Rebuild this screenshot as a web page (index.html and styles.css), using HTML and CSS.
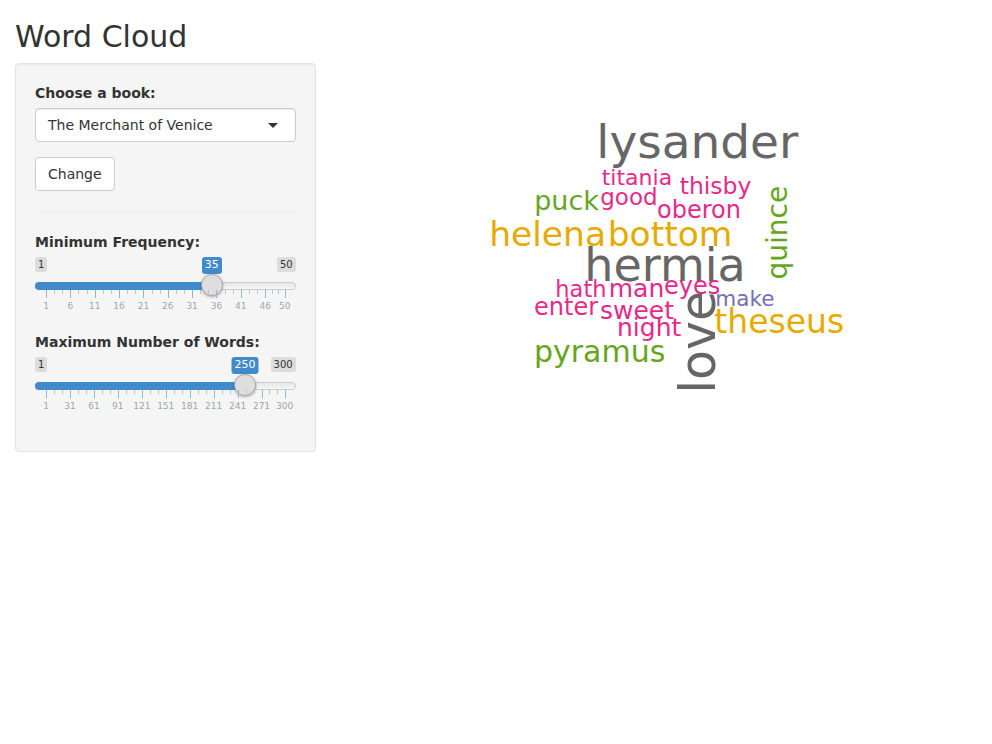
FILE: index.html
```html
<!DOCTYPE html>
<html lang="en">
<head>
<meta charset="utf-8">
<title>Word Cloud</title>
<link rel="stylesheet" href="styles.css">
</head>
<body>
<div class="container">
  <h2 class="title">Word Cloud</h2>
  <div class="row">
    <div class="sidebar">
      <form class="well">
        <div class="form-group">
          <label class="control-label">Choose a book:</label>
          <div class="select-input">
            <span class="select-value">The Merchant of Venice</span>
            <span class="caret"></span>
          </div>
        </div>
        <button type="button" class="btn">Change</button>
        <hr class="divider">
        <div class="form-group">
          <label class="control-label">Minimum Frequency:</label>
          <div class="irs">
            <span class="irs-min">1</span>
            <span class="irs-max">50</span>
            <span class="irs-line"></span>
            <span class="irs-bar" style="width:176.8px"></span>
            <span class="irs-single" style="left:176.8px">35</span>
            <span class="irs-handle" style="left:165.8px"></span>
            <div class="irs-grid">
              <span class="pol big" style="left:0%"></span>
              <span class="pol" style="left:3.401%"></span>
              <span class="pol" style="left:6.803%"></span>
              <span class="pol big" style="left:10.204%"></span>
              <span class="pol" style="left:13.605%"></span>
              <span class="pol" style="left:17.007%"></span>
              <span class="pol big" style="left:20.408%"></span>
              <span class="pol" style="left:23.810%"></span>
              <span class="pol" style="left:27.211%"></span>
              <span class="pol big" style="left:30.612%"></span>
              <span class="pol" style="left:34.014%"></span>
              <span class="pol" style="left:37.415%"></span>
              <span class="pol big" style="left:40.816%"></span>
              <span class="pol" style="left:44.218%"></span>
              <span class="pol" style="left:47.619%"></span>
              <span class="pol big" style="left:51.020%"></span>
              <span class="pol" style="left:54.422%"></span>
              <span class="pol" style="left:57.823%"></span>
              <span class="pol big" style="left:61.224%"></span>
              <span class="pol" style="left:64.626%"></span>
              <span class="pol" style="left:68.027%"></span>
              <span class="pol big" style="left:71.429%"></span>
              <span class="pol" style="left:74.830%"></span>
              <span class="pol" style="left:78.231%"></span>
              <span class="pol big" style="left:81.633%"></span>
              <span class="pol" style="left:85.034%"></span>
              <span class="pol" style="left:88.435%"></span>
              <span class="pol big" style="left:91.837%"></span>
              <span class="pol" style="left:94.558%"></span>
              <span class="pol" style="left:97.279%"></span>
              <span class="pol big" style="left:100%"></span>
              <span class="grid-text" style="left:0%">1</span>
              <span class="grid-text" style="left:10.204%">6</span>
              <span class="grid-text" style="left:20.408%">11</span>
              <span class="grid-text" style="left:30.612%">16</span>
              <span class="grid-text" style="left:40.816%">21</span>
              <span class="grid-text" style="left:51.020%">26</span>
              <span class="grid-text" style="left:61.224%">31</span>
              <span class="grid-text" style="left:71.429%">36</span>
              <span class="grid-text" style="left:81.633%">41</span>
              <span class="grid-text" style="left:91.837%">46</span>
              <span class="grid-text" style="left:100%">50</span>
            </div>
          </div>
        </div>
        <div class="form-group">
          <label class="control-label">Maximum Number of Words:</label>
          <div class="irs">
            <span class="irs-min">1</span>
            <span class="irs-max">300</span>
            <span class="irs-line"></span>
            <span class="irs-bar" style="width:210px"></span>
            <span class="irs-single" style="left:210px">250</span>
            <span class="irs-handle" style="left:199px"></span>
            <div class="irs-grid">
              <span class="pol big" style="left:0%"></span>
              <span class="pol" style="left:3.344%"></span>
              <span class="pol" style="left:6.689%"></span>
              <span class="pol big" style="left:10.033%"></span>
              <span class="pol" style="left:13.378%"></span>
              <span class="pol" style="left:16.722%"></span>
              <span class="pol big" style="left:20.067%"></span>
              <span class="pol" style="left:23.411%"></span>
              <span class="pol" style="left:26.756%"></span>
              <span class="pol big" style="left:30.100%"></span>
              <span class="pol" style="left:33.445%"></span>
              <span class="pol" style="left:36.789%"></span>
              <span class="pol big" style="left:40.134%"></span>
              <span class="pol" style="left:43.478%"></span>
              <span class="pol" style="left:46.823%"></span>
              <span class="pol big" style="left:50.167%"></span>
              <span class="pol" style="left:53.512%"></span>
              <span class="pol" style="left:56.856%"></span>
              <span class="pol big" style="left:60.201%"></span>
              <span class="pol" style="left:63.545%"></span>
              <span class="pol" style="left:66.890%"></span>
              <span class="pol big" style="left:70.234%"></span>
              <span class="pol" style="left:73.579%"></span>
              <span class="pol" style="left:76.923%"></span>
              <span class="pol big" style="left:80.268%"></span>
              <span class="pol" style="left:83.612%"></span>
              <span class="pol" style="left:86.957%"></span>
              <span class="pol big" style="left:90.301%"></span>
              <span class="pol" style="left:93.534%"></span>
              <span class="pol" style="left:96.767%"></span>
              <span class="pol big" style="left:100%"></span>
              <span class="grid-text" style="left:0%">1</span>
              <span class="grid-text" style="left:10.033%">31</span>
              <span class="grid-text" style="left:20.067%">61</span>
              <span class="grid-text" style="left:30.100%">91</span>
              <span class="grid-text" style="left:40.134%">121</span>
              <span class="grid-text" style="left:50.167%">151</span>
              <span class="grid-text" style="left:60.201%">181</span>
              <span class="grid-text" style="left:70.234%">211</span>
              <span class="grid-text" style="left:80.268%">241</span>
              <span class="grid-text" style="left:90.301%">271</span>
              <span class="grid-text" style="left:100%">300</span>
            </div>
          </div>
        </div>
      </form>
    </div>
    <div class="main">
      <svg class="cloud" width="631" height="400" viewBox="0 0 631 400">
        <g transform="translate(-345.667 -63)">
          <text class="w gray" x="596" y="157.5" font-size="47">lysander</text>
          <text class="w pink" x="601.4" y="185" font-size="22">titania</text>
          <text class="w pink" x="679.4" y="194" font-size="23.5">thisby</text>
          <text class="w green" x="533.8" y="209.5" font-size="27">puck</text>
          <text class="w pink" x="599.9" y="205" font-size="23">good</text>
          <text class="w pink" x="656.7" y="218" font-size="24">oberon</text>
          <text class="w gold" x="488.8" y="245.5" font-size="34.5">helena</text>
          <text class="w gold" x="607.3" y="245.5" font-size="34.5">bottom</text>
          <text class="w gray" x="584" y="281" font-size="46">hermia</text>
          <text class="w pink" x="555" y="297" font-size="22.5">hath</text>
          <text class="w pink" x="608.4" y="297" font-size="25">man</text>
          <text class="w pink" x="663.7" y="294" font-size="24">eyes</text>
          <text class="w pink" x="533.7" y="315" font-size="24">enter</text>
          <text class="w pink" x="599.6" y="319" font-size="25">sweet</text>
          <text class="w pink" x="616.7" y="336" font-size="25">night</text>
          <text class="w purple" x="715" y="306" font-size="21.5">make</text>
          <text class="w gold" x="714" y="333" font-size="33">theseus</text>
          <text class="w green" x="533.6" y="362" font-size="30">pyramus</text>
          <text class="w green" transform="translate(787 279.5) rotate(-90)" font-size="28">quince</text>
          <text class="w gray" transform="translate(715 393.6) rotate(-90)" font-size="49">love</text>
        </g>
      </svg>
    </div>
  </div>
</div>
</body>
</html>
```

FILE: styles.css
```css
* {
  box-sizing: border-box;
}

html, body {
  margin: 0;
  padding: 0;
  background: #ffffff;
}

body {
  font-family: "DejaVu Sans", "Liberation Sans", sans-serif;
  font-size: 14px;
  line-height: 1.42857143;
  color: #333333;
}

.container {
  padding: 0 15px;
}

.title {
  font-size: 30px;
  font-weight: 500;
  line-height: 1.1;
  margin: 20px 0 10px;
  color: #333333;
}

.row {
  display: flex;
  margin: 0 -15px;
}

.sidebar {
  flex: 0 0 33.33333%;
  padding: 0 15px;
}

.main {
  flex: 0 0 66.66667%;
  padding: 0 15px;
}

.well {
  display: block;
  margin: 0 0 20px;
  padding: 19px;
  background-color: #f5f5f5;
  border: 1px solid #e3e3e3;
  border-radius: 4px;
  box-shadow: inset 0 1px 1px rgba(0, 0, 0, 0.05);
}

.form-group {
  margin-bottom: 15px;
}

.control-label {
  display: block;
  font-weight: 700;
  line-height: 20px;
  margin-bottom: 5px;
}

.select-input {
  display: flex;
  align-items: center;
  height: 34px;
  padding: 6px 12px;
  background: #ffffff;
  border: 1px solid #cccccc;
  border-radius: 4px;
  box-shadow: inset 0 1px 1px rgba(0, 0, 0, 0.075);
  line-height: 20px;
  color: #333333;
}

.select-value {
  flex: 1 1 auto;
}

.caret {
  flex: 0 0 auto;
  width: 0;
  height: 0;
  margin-right: 5px;
  margin-top: 1px;
  border-style: solid;
  border-width: 5px 5px 0 5px;
  border-color: #333333 transparent transparent transparent;
}

.btn {
  display: inline-block;
  height: 34px;
  padding: 6px 12px;
  font-family: inherit;
  font-size: 14px;
  line-height: 20px;
  color: #333333;
  background-color: #ffffff;
  border: 1px solid #cccccc;
  border-radius: 4px;
  margin: 0;
  vertical-align: top;
}

.divider {
  margin: 20px 0;
  border: 0;
  border-top: 1px solid #eeeeee;
  height: 0;
}

/* range slider */
.irs {
  position: relative;
  height: 60px;
}

.irs-min,
.irs-max {
  position: absolute;
  top: 0;
  padding: 1px 3px;
  font-size: 10px;
  line-height: 1.333;
  color: #333333;
  background-color: rgba(0, 0, 0, 0.1);
  border-radius: 3px;
}

.irs-min {
  left: 0;
}

.irs-max {
  right: 0;
}

.irs-single {
  position: absolute;
  top: 0;
  transform: translateX(-50%);
  padding: 1px 3px;
  font-size: 11px;
  line-height: 1.333;
  color: #ffffff;
  background-color: #428bca;
  border-radius: 3px;
  white-space: nowrap;
}

.irs-line {
  position: absolute;
  top: 25px;
  left: 0;
  width: 100%;
  height: 8px;
  border: 1px solid #cccccc;
  border-radius: 8px;
  background: linear-gradient(to bottom, #dedede -50%, #ffffff 150%);
}

.irs-bar {
  position: absolute;
  top: 25px;
  left: 0;
  height: 8px;
  background: #428bca;
  border-radius: 8px 0 0 8px;
}

.irs-handle {
  position: absolute;
  top: 17px;
  width: 22px;
  height: 22px;
  border: 1px solid #ababab;
  background-color: #dedede;
  border-radius: 50%;
  box-shadow: 0 1px 3px rgba(0, 0, 0, 0.3);
}

.irs-grid {
  position: absolute;
  top: 33px;
  left: 11px;
  right: 11px;
  height: 27px;
}

.pol {
  position: absolute;
  top: 0;
  width: 1px;
  height: 4px;
  background: #b9c5d0;
}

.pol.big {
  height: 8px;
  background: #8fb6dc;
}

.grid-text {
  position: absolute;
  top: 12px;
  transform: translateX(-50%);
  font-size: 9px;
  line-height: 9px;
  color: #9ea6ad;
  white-space: nowrap;
}

/* word cloud */
.cloud {
  display: block;
}

.w {
  font-family: "DejaVu Sans", sans-serif;
}

.gray {
  fill: #666666;
}

.pink {
  fill: #e7298a;
}

.green {
  fill: #66a61e;
}

.gold {
  fill: #e6ab02;
}

.purple {
  fill: #7570b3;
}
```
